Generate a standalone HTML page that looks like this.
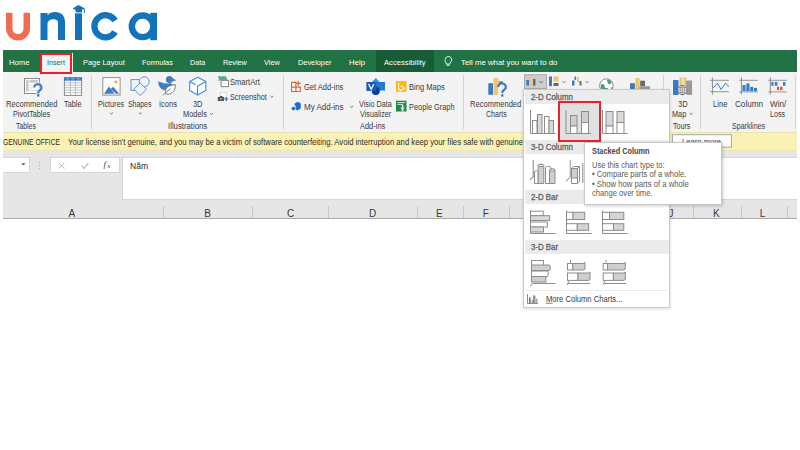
<!DOCTYPE html>
<html><head><meta charset="utf-8">
<style>
html,body{margin:0;padding:0;width:800px;height:450px;overflow:hidden;background:#fff;}
body{position:relative;font-family:"Liberation Sans",sans-serif;}
.a{position:absolute;}
.t{position:absolute;white-space:nowrap;line-height:1;transform-origin:0 0;z-index:5;}
svg{position:absolute;overflow:visible;}
</style></head><body>
<!-- logo -->
<svg class="a" style="left:0;top:0" width="170" height="48" viewBox="0 0 170 48">
  <path d="M9.25 12.8 V28.5 A8.75 8.75 0 0 0 26.75 28.5 V12.8" fill="none" stroke="#F06C50" stroke-width="6.5"/>
  <path d="M40.5 40V13H47.5V15.2C49.3 13 52 12 55 12C61.2 12 65 15.6 65 21.8V40H58V23C58 20.4 56.6 19.2 53.6 19.2C50 19.2 47.5 21 47.5 24.5V40Z" fill="#1474BB"/>
  <rect x="75" y="13.3" width="7" height="26.7" fill="#1474BB"/>
  <path d="M72.5 8.6 L78.5 5 L85 8.6 L78.5 11.2 Z" fill="#1474BB"/>
  <rect x="75.6" y="9" width="6.4" height="3.4" fill="#1474BB"/>
  <path d="M84.3 8.8 V13" stroke="#1474BB" stroke-width="1"/>
  <path d="M115.04 20.57 A11.1 11.1 0 1 0 115.04 31.93" fill="none" stroke="#1474BB" stroke-width="6.3"/>
  <circle cx="142.6" cy="26.3" r="10.8" fill="none" stroke="#1474BB" stroke-width="6.4"/>
  <rect x="150.2" y="12.8" width="6.8" height="27.4" fill="#1474BB"/>
</svg>
<!-- tab bar -->
<div class="a" style="left:2.5px;top:50px;width:794.5px;height:22px;background:#217346"></div>
<div class="a" style="left:375.6px;top:50px;width:58px;height:22px;background:#185C37"></div>
<div class="a" style="left:40px;top:52.5px;width:33px;height:20px;background:#F3F3F3"></div>
<!-- ribbon body -->
<div class="a" style="left:2.5px;top:72px;width:794.5px;height:60px;background:#F3F3F3"></div>
<div class="a" style="left:39.5px;top:52.5px;width:32px;height:21px;box-sizing:border-box;border:2px solid #E8212B;z-index:6"></div>
<!-- separators -->
<div class="a" style="left:91px;top:75px;width:1px;height:54px;background:#D4D4D4"></div>
<div class="a" style="left:283.2px;top:75px;width:1px;height:54px;background:#D4D4D4"></div>
<div class="a" style="left:462.6px;top:75px;width:1px;height:54px;background:#D4D4D4"></div>
<div class="a" style="left:663.2px;top:75px;width:1px;height:54px;background:#D4D4D4"></div>
<div class="a" style="left:700.1px;top:75px;width:1px;height:54px;background:#D4D4D4"></div>
<div class="a" style="left:795px;top:75px;width:1px;height:54px;background:#D4D4D4"></div>
<!-- yellow bar -->
<div class="a" style="left:2.5px;top:131.5px;width:794.5px;height:19px;box-sizing:border-box;background:#FAF2B4;border-top:1px solid #E9E2B0;border-bottom:1px solid #EDE6B4"></div>
<!-- formula bar -->
<div class="a" style="left:2.5px;top:150.5px;width:794.5px;height:68px;background:#E6E6E6"></div>
<div class="a" style="left:2.5px;top:157.4px;width:27.5px;height:16px;background:#fff;box-sizing:border-box;border:1px solid #D6D6D6;border-left:none"></div>
<div class="a" style="left:49.6px;top:157.4px;width:70px;height:16px;background:#fff;box-sizing:border-box;border:1px solid #D6D6D6"></div>
<div class="a" style="left:122px;top:157.4px;width:675px;height:42.2px;background:#fff;box-sizing:border-box;border:1px solid #D6D6D6;border-right:none"></div>

<!-- ribbon icons -->
<svg class="a" style="left:0;top:0;z-index:3" width="800" height="450" viewBox="0 0 800 450">
 <!-- tab lightbulb -->
 <path d="M445.3 59.5a3.2 3.2 0 1 1 5.6 2.3c-0.7 0.8-1 1.4-1 2.3h-3.6c0-0.9-0.3-1.5-1-2.3a3.2 3.2 0 0 1 0-2.3z M446.6 65.3h3" fill="none" stroke="#fff" stroke-width="0.9"/>

 <!-- chevrons -->
 <g fill="none" stroke="#666" stroke-width="0.9">
  <path d="M109.9 112.6l1.5 1.4l1.5-1.4"/>
  <path d="M138.8 112.6l1.5 1.4l1.5-1.4"/>
  <path d="M210 113.2l1.5 1.4l1.5-1.4"/>
  <path d="M270.3 95.9l1.5 1.4l1.5-1.4"/>
  <path d="M350.1 106l1.5 1.4l1.5-1.4"/>
  <path d="M689.5 113.1l1.5 1.4l1.5-1.4"/>
 </g>
 <!-- Recommended PivotTables -->
 <rect x="24.5" y="78.5" width="15" height="15" fill="#fff" stroke="#8A8A8A" stroke-width="1"/>
 <rect x="26" y="80" width="2.6" height="11.5" fill="#C8C8C8"/>
 <rect x="29.5" y="80" width="8.5" height="2.8" fill="#C8C8C8"/>
 <path d="M29.5 85.5h3 M29.5 88h3 M29.5 90.5h8" stroke="#D8D8D8" stroke-width="1"/>
 <path d="M34.2 87.6a3.6 3.4 0 1 1 5.4 2.9c-1 0.6-1.4 1.1-1.4 2.2v0.5" fill="none" stroke="#F3F3F3" stroke-width="3.6"/>
 <rect x="36.2" y="93.4" width="4" height="4" fill="#F3F3F3"/>
 <path d="M34.2 87.6a3.6 3.4 0 1 1 5.4 2.9c-1 0.6-1.4 1.1-1.4 2.2v0.5" fill="none" stroke="#3E7DC6" stroke-width="2.1"/>
 <rect x="37" y="94.2" width="2.4" height="2.4" fill="#3E7DC6"/>
 <!-- Table -->
 <rect x="64.4" y="77.8" width="17.2" height="17.6" fill="#fff" stroke="#8A8A8A" stroke-width="1"/>
 <rect x="64" y="77.3" width="18" height="3.4" fill="#3E7DC6"/>
 <path d="M66.6 78.4h2l-1 1.2z M72 78.4h2l-1 1.2z M77.5 78.4h2l-1 1.2z" fill="#fff"/>
 <path d="M70.3 80.7V95.4 M75.4 80.7V95.4 M64.4 82.8H81.6 M64.4 85.2H81.6 M64.4 87.7H81.6 M64.4 90.1H81.6 M64.4 92.6H81.6" stroke="#A8A8A8" stroke-width="0.7"/>
 <!-- Pictures -->
 <rect x="102.8" y="77.6" width="17.3" height="17.5" fill="#fff" stroke="#8F8F8F" stroke-width="1"/>
 <path d="M104 93.8L108.9 86.4L114.5 93.8Z" fill="#3E7DC6"/>
 <path d="M110.6 89L113.2 86.8L119.2 93.8H116Z" fill="#3E7DC6"/>
 <circle cx="115.9" cy="81.9" r="1.7" fill="#F0B54A"/>
 <!-- Shapes -->
 <g fill="none" stroke="#5B95D6" stroke-width="1">
  <rect x="131" y="79.6" width="10.8" height="10.8"/>
  <circle cx="144.2" cy="81.8" r="5" fill="#F3F3F3"/>
  <path d="M140.2 82.9L146.5 89.2L140.2 95.5L133.9 89.2Z" fill="#F3F3F3"/>
 </g>
 <!-- Icons -->
 <circle cx="169.4" cy="79.5" r="3.5" fill="#3E7DC6"/>
 <path d="M172.3 78L176.2 80.2L172.3 81.6Z" fill="#3E7DC6"/>
 <path d="M158.2 81.2C160.5 82 163 83.2 166 83.6L170.5 83.2C172.5 83.5 173 85 172.5 86.5L170 90C167 90.5 163.5 90.3 161.5 89C159.3 87.3 158.2 84.5 158.2 81.2Z" fill="#3E7DC6"/>
 <path d="M163.2 95.4L165.4 92.8C164.8 88.5 167.5 85.5 175.3 84.6C175.6 90.5 172.6 94.2 168 94.2C167 94.2 166.2 94 165.4 93.6 M165.6 92.6L170.6 88.8" fill="#FAFAFA" stroke="#6F6F6F" stroke-width="0.9"/>
 <!-- 3D models cube -->
 <path d="M197.7 77.2L205.8 81.5V90.5L197.7 95L189.7 90.5V81.5Z M189.7 81.5L195.6 84.8 M197.5 86.2L205.8 81.5 M197.5 86.2V95" fill="#fff" stroke="#3D8BE0" stroke-width="1.1" stroke-linejoin="round"/>
 <!-- SmartArt -->
 <path d="M217.7 76.3H226L227.4 80.2H219.6L217.7 81.8L219 79Z" fill="#5BAA84"/>
 <rect x="221.1" y="80.4" width="7.4" height="6.2" fill="#fff" stroke="#8C8C8C" stroke-width="1.1"/>
 <path d="M223 83.2H226.6" stroke="#C8C8C8" stroke-width="0.7"/>
 <!-- Screenshot -->
 <rect x="220.5" y="92.3" width="6.3" height="5.4" fill="#fff" stroke="#C8C8C8" stroke-width="0.6"/>
 <path d="M217.8 97h1.6l0.8-1h2l0.8 1h1v4H217.8Z" fill="#555"/>
 <circle cx="220.9" cy="98.9" r="0.9" fill="#bbb"/>
 <path d="M226.3 97V101 M224.3 99H228.3" stroke="#2E73C8" stroke-width="1.2"/>
 <!-- Get Add-ins -->
 <path d="M291.6 82.4H295.9V87.2H300.3V91.5H291.6Z M295.9 87.2V91.5 M291.6 87.2H295.9" fill="#fff" stroke="#E5633A" stroke-width="1.2"/>
 <path d="M298.4 81V85.8 M296 83.4H300.8" stroke="#E5633A" stroke-width="1.2"/>
 <!-- My Add-ins -->
 <path d="M294.5 103.4L297.8 101.8L300.8 103.4V108.6L297.5 110.6L295.6 109.6V105.8L294.5 105.2Z" fill="#1E6ED4"/>
 <circle cx="293.4" cy="108.6" r="1.8" fill="#1E6ED4"/>
 <!-- Visio -->
 <path d="M375.8 78L382 84.5L375.8 91L369.6 84.5Z" fill="#3196E8"/>
 <rect x="376" y="82" width="9" height="8.5" fill="#1F7BD6"/>
 <circle cx="375.8" cy="90.9" r="4" fill="#0F3E8C"/>
 <rect x="366.4" y="82" width="9.8" height="8.9" fill="#185ABD"/>
 <path d="M368.6 84l2.6 5.2l2.6-5.2" fill="none" stroke="#fff" stroke-width="1.3"/>
 <!-- Bing maps -->
 <rect x="396" y="81.1" width="10.5" height="10.7" fill="#FFB900"/>
 <path d="M398.6 82.8V89.4L400.6 90.5L404.4 88.3L402.2 86.2L400.8 86.4" fill="none" stroke="#fff" stroke-width="1.1"/>
 <!-- People graph -->
 <rect x="396" y="100.7" width="10.5" height="10.8" fill="#1E8A48"/>
 <path d="M397.4 102.6H405 M397.4 104.4H403" stroke="#fff" stroke-width="0.8"/>
 <circle cx="402.6" cy="106" r="1" fill="#fff"/>
 <path d="M400.4 107.4H404.8L404 108.8H403.4V111.2H401.7V108.8H401.1Z" fill="#fff"/>
 <!-- Recommended charts -->
 <rect x="488.3" y="83.2" width="4.7" height="11.6" fill="#3C7BC4"/>
 <rect x="493.5" y="78" width="4.7" height="16.8" fill="#F0C470"/>
 <rect x="498.6" y="81.3" width="4.4" height="1.8" fill="#7A7A7A"/>
 <path d="M498.2 87a3.8 3.5 0 1 1 5.7 3c-1.1 0.6-1.5 1.2-1.5 2.3v0.6" fill="none" stroke="#3C7BC4" stroke-width="2.1"/>
 <rect x="501.1" y="94.3" width="2.4" height="2.3" fill="#3C7BC4"/>
 <!-- chart type buttons -->
 <rect x="524.5" y="74.7" width="22" height="13.8" fill="#CDCDCD" stroke="#ABABAB" stroke-width="1"/>
 <rect x="526.3" y="80" width="2.7" height="5.6" fill="#3C7BC4"/>
 <rect x="529.5" y="76.8" width="2.6" height="8.8" fill="#F0C470"/>
 <rect x="533" y="79" width="2.5" height="6.6" fill="#6A6A6A"/>
 <path d="M539.2 81.2l1.8 1.6l1.8-1.6" fill="none" stroke="#555" stroke-width="0.8"/>
 <rect x="549" y="76.5" width="3" height="9.7" fill="#3C7BC4"/>
 <rect x="553.5" y="76.5" width="5" height="5" fill="#F0C470"/>
 <rect x="553.5" y="83" width="5" height="3" fill="#6A6A6A"/>
 <path d="M562.3 81.3l1.6 1.4l1.6-1.4" fill="none" stroke="#666" stroke-width="0.8"/>
 <rect x="572" y="80.5" width="2.5" height="5" fill="#3C7BC4"/>
 <rect x="574.5" y="76.5" width="1.6" height="3.5" fill="#3C7BC4"/>
 <rect x="577" y="77" width="2" height="5" fill="#F0C470"/>
 <rect x="579.5" y="81" width="2" height="4.5" fill="#6A6A6A"/>
 <path d="M585.5 81.3l1.6 1.4l1.6-1.4" fill="none" stroke="#666" stroke-width="0.8"/>
 <!-- maps globe -->
 <circle cx="606.4" cy="85.6" r="6.8" fill="#fff" stroke="#8A8A8A" stroke-width="1"/>
 <path d="M600.8 84.5c1.5-1 2.6-0.5 3.6 0.8l0.8 2.6h2.4l1.2 2.5l-2 1.6h-3.5l-0.7-2.4l-1.8-1.2z M606.8 79.5c1.8 0 3.5 0.7 4.8 2l-0.6 2.2l-2.5 0.5l-1-1.8z M611.2 87.5l1.6-0.6l0.3 1.5l-1.6 1.5z" fill="#4E9E74"/>
 <!-- pivotchart -->
 <rect x="630" y="83.2" width="4.9" height="6" fill="#3C7BC4"/>
 <rect x="635.3" y="78.1" width="4.4" height="11" fill="#F0C470"/>
 <rect x="640.2" y="80.7" width="4.8" height="5.3" fill="#6A6A6A"/>
 <rect x="639.5" y="86.2" width="10.5" height="3" fill="#9A9A9A"/>
 <!-- 3D map -->
 <rect x="673" y="80" width="5.6" height="15" rx="1" fill="#3C7BC4"/>
 <rect x="679.5" y="77.4" width="2.8" height="9" fill="#F0C470"/>
 <rect x="683.5" y="77.4" width="2.8" height="9" fill="#F0C470"/>
 <rect x="686.1" y="80.5" width="6" height="14.5" rx="1" fill="#9A9A9A"/>
 <circle cx="682.4" cy="90.1" r="4.6" fill="#fff" stroke="#6A6A6A" stroke-width="0.8"/>
 <path d="M677.8 90.1h9.2 M678.6 87.8h7.6 M678.6 92.4h7.6 M682.4 85.5v9.2" stroke="#6A6A6A" stroke-width="0.6"/>
 <ellipse cx="682.4" cy="90.1" rx="2.2" ry="4.6" fill="none" stroke="#6A6A6A" stroke-width="0.6"/>
 <!-- sparkline line -->
 <path d="M710.1 80.4H728.9 M710.1 91.6H728.9" stroke="#A9A9A9" stroke-width="1.2"/>
 <path d="M712.4 77.4V94.6" stroke="#8A8A8A" stroke-width="1"/>
 <path d="M713 88L717.5 83.2L721 89.5L725.5 83.2L729 86.5" fill="none" stroke="#3C7BC4" stroke-width="1"/>
 <!-- sparkline column -->
 <path d="M739.1 80.4H757.9 M739.1 91.8H757.9" stroke="#A9A9A9" stroke-width="1.2"/>
 <path d="M741.4 77.4V94.6" stroke="#8A8A8A" stroke-width="1"/>
 <rect x="742.5" y="85.1" width="3" height="6" fill="#3C7BC4"/>
 <rect x="746.3" y="83.4" width="3.2" height="7.7" fill="#3C7BC4"/>
 <rect x="750.2" y="86.9" width="3.1" height="4.2" fill="#3C7BC4"/>
 <rect x="754" y="87.9" width="3" height="3.2" fill="#3C7BC4"/>
 <!-- sparkline win/loss -->
 <path d="M768.4 80.4H786.8 M768.4 91.8H786.8" stroke="#A9A9A9" stroke-width="1.2"/>
 <path d="M770.3 77.4V94.6" stroke="#8A8A8A" stroke-width="1"/>
 <rect x="771.3" y="82" width="2.2" height="3.8" fill="#3C7BC4"/>
 <rect x="774.8" y="82" width="2.6" height="3.8" fill="#3C7BC4"/>
 <rect x="777" y="86.8" width="2" height="3.3" fill="#E0502A"/>
 <rect x="780" y="86.8" width="2.4" height="3.3" fill="#E0502A"/>
 <rect x="783" y="82" width="2.4" height="3.8" fill="#3C7BC4"/>
 <!-- formula bar -->
 <path d="M21.4 163.2h4l-2 2.3z" fill="#555"/>
 <circle cx="39.4" cy="162.6" r="0.5" fill="#9A9A9A"/><circle cx="39.4" cy="165.4" r="0.5" fill="#9A9A9A"/><circle cx="39.4" cy="168.2" r="0.5" fill="#9A9A9A"/>
 <path d="M58.6 162.8L64.4 168.6 M64.4 162.8L58.6 168.6" stroke="#B8B8B8" stroke-width="1"/>
 <path d="M81.6 165.6L84 168.3L88.4 162.8" fill="none" stroke="#B8B8B8" stroke-width="1.1"/>
 <text x="103.6" y="167" font-family="Liberation Serif" font-style="italic" font-size="9" fill="#444">f</text>
 <text x="107.4" y="168.2" font-family="Liberation Serif" font-style="italic" font-size="6.6" fill="#444">x</text>
 <!-- learn more button -->
 <rect x="672.4" y="134.7" width="59" height="12.5" fill="#fff" stroke="#A6A6A6" stroke-width="1"/>
</svg>
<!-- header row -->
<div class="a" style="left:2.5px;top:218px;width:794.5px;height:1px;background:#ABABAB"></div>

<!-- column header separators -->
<div class="a" style="left:163px;top:205.5px;width:1px;height:12.5px;background:#C9C9C9"></div>
<div class="a" style="left:252.1px;top:205.5px;width:1px;height:12.5px;background:#C9C9C9"></div>
<div class="a" style="left:327.6px;top:205.5px;width:1px;height:12.5px;background:#C9C9C9"></div>
<div class="a" style="left:417px;top:205.5px;width:1px;height:12.5px;background:#C9C9C9"></div>
<div class="a" style="left:463.2px;top:205.5px;width:1px;height:12.5px;background:#C9C9C9"></div>
<div class="a" style="left:509px;top:205.5px;width:1px;height:12.5px;background:#C9C9C9"></div>
<div class="a" style="left:693.1px;top:205.5px;width:1px;height:12.5px;background:#C9C9C9"></div>
<div class="a" style="left:740.5px;top:205.5px;width:1px;height:12.5px;background:#C9C9C9"></div>
<div class="a" style="left:786.5px;top:205.5px;width:1px;height:12.5px;background:#C9C9C9"></div>
<!-- dropdown panel -->
<div class="a" style="left:523.2px;top:89px;width:146.4px;height:219.4px;box-sizing:border-box;background:#fff;border:1px solid #CACACA;box-shadow:0 1px 3px rgba(0,0,0,0.16);z-index:10"></div>
<div class="a" style="left:525px;top:90px;width:143.6px;height:14px;background:#EBEBEB;z-index:11"></div>
<div class="a" style="left:525px;top:140px;width:143.6px;height:13.5px;background:#EBEBEB;z-index:11"></div>
<div class="a" style="left:525px;top:190px;width:143.6px;height:13.7px;background:#EBEBEB;z-index:11"></div>
<div class="a" style="left:525px;top:240.3px;width:143.6px;height:13.4px;background:#EBEBEB;z-index:11"></div>
<div class="a" style="left:525px;top:290px;width:142px;height:1px;background:#EAEAEA;z-index:11"></div>
<div class="a" style="left:558px;top:101.4px;width:42.5px;height:41.1px;box-sizing:border-box;border:2px solid #E8212B;background:#E0E0E0;z-index:11"></div>
<svg class="a" style="left:0;top:0;z-index:12" width="800" height="450" viewBox="0 0 800 450">
 <g fill="none" stroke="#8C8C8C" stroke-width="1">
  <!-- 2D clustered -->
  <path d="M530.5 110V133.5H555.5"/>
  <rect x="532.5" y="120.5" width="4.5" height="13" fill="#fff"/>
  <rect x="537.5" y="114.5" width="4.5" height="19" fill="#D9D9D9"/>
  <rect x="544.5" y="116.5" width="4.5" height="17" fill="#fff"/>
  <rect x="549" y="120.5" width="4.5" height="13" fill="#D9D9D9"/>
  <!-- 2D stacked -->
  <path d="M566 110V133.5H591"/>
  <rect x="570.5" y="115.5" width="6.5" height="10.5" fill="#CFCFCF"/>
  <rect x="570.5" y="126" width="6.5" height="7.5" fill="#fff"/>
  <rect x="581.5" y="111.5" width="7" height="11" fill="#CFCFCF"/>
  <rect x="581.5" y="122.5" width="7" height="11" fill="#fff"/>
  <!-- 100% stacked -->
  <path d="M602.5 110V133.5H627.5"/>
  <rect x="606" y="111.5" width="7" height="14.5" fill="#D9D9D9"/>
  <rect x="606" y="126" width="7" height="7.5" fill="#fff"/>
  <rect x="617" y="111.5" width="7" height="11" fill="#D9D9D9"/>
  <rect x="617" y="122.5" width="7" height="11" fill="#fff"/>
  <!-- 3D clustered -->
  <path d="M533.3 160V176.6L530 179.8" stroke="#A0A0A0" stroke-width="1.3"/>
  <path d="M534.5 183.5V171.7A1.9 1.2 0 0 1 538.2 171.7V183.5Z" fill="#fff"/>
  <path d="M538.2 183.5V165.4A2.85 1.3 0 0 1 543.8 165.4V183.5Z" fill="#D0D0D0"/>
  <ellipse cx="541" cy="165.4" rx="2.8" ry="1.2" fill="#EFEFEF"/>
  <path d="M545.5 183.5V167.5A2.85 1.3 0 0 1 551.1 167.5V183.5Z" fill="#fff"/>
  <path d="M549.5 183.5V170.2A2.75 1.3 0 0 1 555 170.2V183.5Z" fill="#D0D0D0"/>
  <ellipse cx="552.25" cy="170.2" rx="2.7" ry="1.2" fill="#EFEFEF"/>
  <!-- 3D stacked -->
  <path d="M570.3 160V176.6L566 181.3" stroke="#A0A0A0" stroke-width="1.1"/>
  <path d="M571.5 168.5L573.5 166.5H579.5V181.5L577.5 183.5H571.5Z" fill="#fff"/>
  <rect x="571.5" y="168.5" width="6" height="9.5" fill="#CFCFCF"/>
  <path d="M571.5 168.5H577.5L579.5 166.5 M577.5 168.5V183.5"/>
  <path d="M582.8 163V183" />
  <!-- 2D bar clustered -->
  <path d="M530.5 210.5V233.5H555.7"/>
  <rect x="530.5" y="211.2" width="12.7" height="4.5" fill="#fff"/>
  <rect x="530.5" y="215.7" width="19.2" height="4.8" fill="#D9D9D9"/>
  <rect x="530.5" y="222" width="16.9" height="5" fill="#fff"/>
  <rect x="530.5" y="227" width="13" height="5" fill="#D9D9D9"/>
  <!-- 2D bar stacked -->
  <path d="M566.5 210.5V233.5H591.5"/>
  <rect x="566.5" y="212.3" width="6.5" height="7.2" fill="#fff"/>
  <rect x="573" y="212.3" width="11.7" height="7.2" fill="#D4D4D4"/>
  <rect x="566.5" y="223.7" width="10.8" height="6.6" fill="#fff"/>
  <rect x="577.3" y="223.7" width="11.3" height="6.6" fill="#D4D4D4"/>
  <!-- 2D bar 100% -->
  <path d="M602.5 210.5V233.5H627.7"/>
  <rect x="602.5" y="212.3" width="7" height="7.2" fill="#fff"/>
  <rect x="609.5" y="212.3" width="14.3" height="7.2" fill="#D4D4D4"/>
  <rect x="602.5" y="223.7" width="11" height="6.6" fill="#fff"/>
  <rect x="613.5" y="223.7" width="10.3" height="6.6" fill="#D4D4D4"/>
  <!-- 3D bar clustered -->
  <path d="M533 283.5H555.5 M533 283.5L530 286"/>
  <rect x="531.5" y="260.5" width="12" height="5.5" fill="#fff"/>
  <path d="M531.5 265H549.5Q551.5 267.5 549.5 270.5H531.5Z" fill="#CFCFCF"/>
  <path d="M531.5 271H547.5Q549.5 273.7 547.5 276.5H531.5Z" fill="#fff"/>
  <rect x="531.5" y="276.5" width="14.5" height="5.5" fill="#CFCFCF"/>
  <!-- 3D bar stacked -->
  <path d="M570.5 260V262.5 M568 283.5H590 M569 281L567 285"/>
  <rect x="567.5" y="263.5" width="5.2" height="6.5" fill="#fff"/>
  <path d="M572.7 263.5H583L585 262.5V269L583.5 270H572.7Z" fill="#CFCFCF"/>
  <rect x="567.5" y="273" width="10.5" height="7.4" fill="#fff"/>
  <path d="M578 273H588.5L590 272V279.5L588.5 280.4H578Z" fill="#CFCFCF"/>
  <!-- 3D bar 100% -->
  <path d="M606 260V262.5 M604 283.5H626 M605 281L603 285"/>
  <rect x="603.2" y="263.5" width="4.3" height="6.5" fill="#fff"/>
  <path d="M607.5 263.5H623.5L625.3 262.5V269L623.5 270H607.5Z" fill="#CFCFCF"/>
  <rect x="603.2" y="273" width="10.2" height="7.4" fill="#fff"/>
  <path d="M613.4 273H623.5L625.3 272V279.5L623.5 280.4H613.4Z" fill="#CFCFCF"/>
  <!-- more icon -->
  <path d="M527.5 294V303.5H538"/>
  <rect x="529" y="297.5" width="2" height="5.5" fill="#A8A8A8" stroke="none"/>
  <rect x="531.5" y="300" width="1.8" height="3" fill="#A8A8A8" stroke="none"/>
  <rect x="533.6" y="295.5" width="2" height="7.5" fill="#A8A8A8" stroke="none"/>
  <rect x="535.9" y="298.5" width="1.6" height="4.5" fill="#A8A8A8" stroke="none"/>
  <path d="M529.5 297.5V303 M533.8 295.5V303" stroke="#707070"/>
  <path d="M545.8 303.3H552.6" stroke="#666" stroke-width="0.8"/>
 </g>
</svg>
<!-- tooltip -->
<div class="a" style="left:584.4px;top:141.6px;width:137.6px;height:63.2px;box-sizing:border-box;background:#fff;border:1px solid #C8C8C8;box-shadow:1px 1px 3px rgba(0,0,0,0.2);z-index:20"></div>

<span class="t" style="left:8.90px;top:59.00px;font-size:7.9px;color:#fff;transform:scaleX(0.9714);z-index:5;">Home</span>
<span class="t" style="left:46.80px;top:59.00px;font-size:7.9px;color:#217346;transform:scaleX(0.9100);z-index:5;">Insert</span>
<span class="t" style="left:83.00px;top:59.00px;font-size:7.9px;color:#fff;transform:scaleX(0.9409);z-index:5;">Page Layout</span>
<span class="t" style="left:142.00px;top:59.00px;font-size:7.9px;color:#fff;transform:scaleX(0.9394);z-index:5;">Formulas</span>
<span class="t" style="left:190.00px;top:59.00px;font-size:7.9px;color:#fff;transform:scaleX(0.9118);z-index:5;">Data</span>
<span class="t" style="left:223.00px;top:59.00px;font-size:7.9px;color:#fff;transform:scaleX(0.9231);z-index:5;">Review</span>
<span class="t" style="left:264.00px;top:59.00px;font-size:7.9px;color:#fff;transform:scaleX(0.9412);z-index:5;">View</span>
<span class="t" style="left:297.50px;top:59.00px;font-size:7.9px;color:#fff;transform:scaleX(0.9306);z-index:5;">Developer</span>
<span class="t" style="left:348.60px;top:59.00px;font-size:7.9px;color:#fff;transform:scaleX(0.9937);z-index:5;">Help</span>
<span class="t" style="left:383.50px;top:59.00px;font-size:7.9px;color:#fff;transform:scaleX(0.9698);z-index:5;">Accessibility</span>
<span class="t" style="left:460.60px;top:59.00px;font-size:7.9px;color:#fff;transform:scaleX(0.9907);z-index:5;">Tell me what you want to do</span>
<span class="t" style="left:5.80px;top:99.88px;font-size:8.5px;color:#3a3a3a;transform:scaleX(0.8914);z-index:5;">Recommended</span>
<span class="t" style="left:13.00px;top:109.88px;font-size:8.5px;color:#3a3a3a;transform:scaleX(0.8545);z-index:5;">PivotTables</span>
<span class="t" style="left:64.00px;top:99.88px;font-size:8.5px;color:#3a3a3a;transform:scaleX(0.8600);z-index:5;">Table</span>
<span class="t" style="left:98.40px;top:99.88px;font-size:8.5px;color:#3a3a3a;transform:scaleX(0.8484);z-index:5;">Pictures</span>
<span class="t" style="left:128.30px;top:99.88px;font-size:8.5px;color:#3a3a3a;transform:scaleX(0.8103);z-index:5;">Shapes</span>
<span class="t" style="left:158.60px;top:99.88px;font-size:8.5px;color:#3a3a3a;transform:scaleX(0.8850);z-index:5;">Icons</span>
<span class="t" style="left:193.30px;top:99.88px;font-size:8.5px;color:#3a3a3a;transform:scaleX(0.8636);z-index:5;">3D</span>
<span class="t" style="left:182.60px;top:109.88px;font-size:8.5px;color:#3a3a3a;transform:scaleX(0.8714);z-index:5;">Models</span>
<span class="t" style="left:229.90px;top:77.88px;font-size:8.5px;color:#3a3a3a;transform:scaleX(0.8912);z-index:5;">SmartArt</span>
<span class="t" style="left:230.30px;top:92.78px;font-size:8.5px;color:#3a3a3a;transform:scaleX(0.8558);z-index:5;">Screenshot</span>
<span class="t" style="left:303.50px;top:83.08px;font-size:8.5px;color:#3a3a3a;transform:scaleX(0.8867);z-index:5;">Get Add-ins</span>
<span class="t" style="left:303.50px;top:102.88px;font-size:8.5px;color:#3a3a3a;transform:scaleX(0.9405);z-index:5;">My Add-ins</span>
<span class="t" style="left:359.00px;top:99.88px;font-size:8.5px;color:#3a3a3a;transform:scaleX(0.8513);z-index:5;">Visio Data</span>
<span class="t" style="left:360.40px;top:109.88px;font-size:8.5px;color:#3a3a3a;transform:scaleX(0.8514);z-index:5;">Visualizer</span>
<span class="t" style="left:408.50px;top:83.08px;font-size:8.5px;color:#3a3a3a;transform:scaleX(0.8925);z-index:5;">Bing Maps</span>
<span class="t" style="left:408.50px;top:102.88px;font-size:8.5px;color:#3a3a3a;transform:scaleX(0.8692);z-index:5;">People Graph</span>
<span class="t" style="left:470.00px;top:99.88px;font-size:8.5px;color:#3a3a3a;transform:scaleX(0.8897);z-index:5;">Recommended</span>
<span class="t" style="left:486.00px;top:109.88px;font-size:8.5px;color:#3a3a3a;transform:scaleX(0.8320);z-index:5;">Charts</span>
<span class="t" style="left:677.80px;top:99.88px;font-size:8.5px;color:#3a3a3a;transform:scaleX(0.8909);z-index:5;">3D</span>
<span class="t" style="left:671.60px;top:109.88px;font-size:8.5px;color:#3a3a3a;transform:scaleX(0.8647);z-index:5;">Map</span>
<span class="t" style="left:712.60px;top:99.88px;font-size:8.5px;color:#3a3a3a;transform:scaleX(0.8937);z-index:5;">Line</span>
<span class="t" style="left:734.70px;top:99.88px;font-size:8.5px;color:#3a3a3a;transform:scaleX(0.9552);z-index:5;">Column</span>
<span class="t" style="left:769.50px;top:99.88px;font-size:8.5px;color:#3a3a3a;transform:scaleX(0.9588);z-index:5;">Win/</span>
<span class="t" style="left:770.00px;top:109.88px;font-size:8.5px;color:#3a3a3a;transform:scaleX(0.8333);z-index:5;">Loss</span>
<span class="t" style="left:15.90px;top:122.08px;font-size:8.5px;color:#3a3a3a;transform:scaleX(0.8080);z-index:5;">Tables</span>
<span class="t" style="left:167.50px;top:122.08px;font-size:8.5px;color:#3a3a3a;transform:scaleX(0.9128);z-index:5;">Illustrations</span>
<span class="t" style="left:360.40px;top:122.08px;font-size:8.5px;color:#3a3a3a;transform:scaleX(0.8759);z-index:5;">Add-ins</span>
<span class="t" style="left:673.30px;top:122.08px;font-size:8.5px;color:#3a3a3a;transform:scaleX(0.8333);z-index:5;">Tours</span>
<span class="t" style="left:731.80px;top:122.08px;font-size:8.5px;color:#3a3a3a;transform:scaleX(0.8325);z-index:5;">Sparklines</span>
<span class="t" style="left:3.30px;top:137.98px;font-size:8.8px;color:#2a2a2a;transform:scaleX(0.7627);z-index:5;">GENUINE OFFICE</span>
<span class="t" style="left:67.50px;top:137.98px;font-size:8.8px;color:#2a2a2a;transform:scaleX(0.8760);z-index:5;">Your license isn't genuine, and you may be a victim of software counterfeiting. Avoid interruption and keep your files safe with genuine</span>
<span class="t" style="left:681.90px;top:138.10px;font-size:7.7px;color:#444;transform:scaleX(0.9923);z-index:5;">Learn more</span>
<span class="t" style="left:130.00px;top:161.67px;font-size:9px;color:#2a2a2a;transform:scaleX(0.9474);z-index:5;">Năm</span>
<span class="t" style="left:68.50px;top:208.70px;font-size:10px;color:#383838;z-index:5;">A</span>
<span class="t" style="left:204.20px;top:208.70px;font-size:10px;color:#383838;z-index:5;">B</span>
<span class="t" style="left:287.10px;top:208.70px;font-size:10px;color:#383838;z-index:5;">C</span>
<span class="t" style="left:369.00px;top:208.70px;font-size:10px;color:#383838;z-index:5;">D</span>
<span class="t" style="left:436.00px;top:208.70px;font-size:10px;color:#383838;z-index:5;">E</span>
<span class="t" style="left:482.75px;top:208.70px;font-size:10px;color:#383838;z-index:5;">F</span>
<span class="t" style="left:668.50px;top:208.70px;font-size:10px;color:#383838;z-index:5;">J</span>
<span class="t" style="left:713.00px;top:208.70px;font-size:10px;color:#383838;z-index:5;">K</span>
<span class="t" style="left:759.80px;top:208.70px;font-size:10px;color:#383838;z-index:5;">L</span>
<span class="t" style="left:530.85px;top:93.08px;font-size:8.4px;color:#606060;transform:scaleX(0.9367);z-index:15;-webkit-text-stroke:0.3px #666">2-D Column</span>
<span class="t" style="left:530.85px;top:142.98px;font-size:8.4px;color:#606060;transform:scaleX(0.9367);z-index:15;-webkit-text-stroke:0.3px #666">3-D Column</span>
<span class="t" style="left:530.75px;top:193.08px;font-size:8.4px;color:#606060;transform:scaleX(0.9397);z-index:15;-webkit-text-stroke:0.3px #666">2-D Bar</span>
<span class="t" style="left:530.75px;top:243.08px;font-size:8.4px;color:#606060;transform:scaleX(0.9397);z-index:15;-webkit-text-stroke:0.3px #666">3-D Bar</span>
<span class="t" style="left:545.80px;top:295.08px;font-size:8.4px;color:#3a3a3a;transform:scaleX(0.9071);z-index:15;">More Column Charts...</span>
<span class="t" style="left:591.70px;top:147.05px;font-size:8.3px;color:#444;font-weight:bold;transform:scaleX(0.8846);z-index:25;">Stacked Column</span>
<span class="t" style="left:591.70px;top:160.58px;font-size:8.4px;color:#5a5a5a;transform:scaleX(0.8951);z-index:25;">Use this chart type to:</span>
<span class="t" style="left:591.70px;top:170.18px;font-size:8.4px;color:#5a5a5a;transform:scaleX(0.9126);z-index:25;">• Compare parts of a whole.</span>
<span class="t" style="left:591.70px;top:179.88px;font-size:8.4px;color:#5a5a5a;transform:scaleX(0.9181);z-index:25;">• Show how parts of a whole</span>
<span class="t" style="left:591.70px;top:189.38px;font-size:8.4px;color:#5a5a5a;transform:scaleX(0.9091);z-index:25;">change over time.</span>
</body></html>
